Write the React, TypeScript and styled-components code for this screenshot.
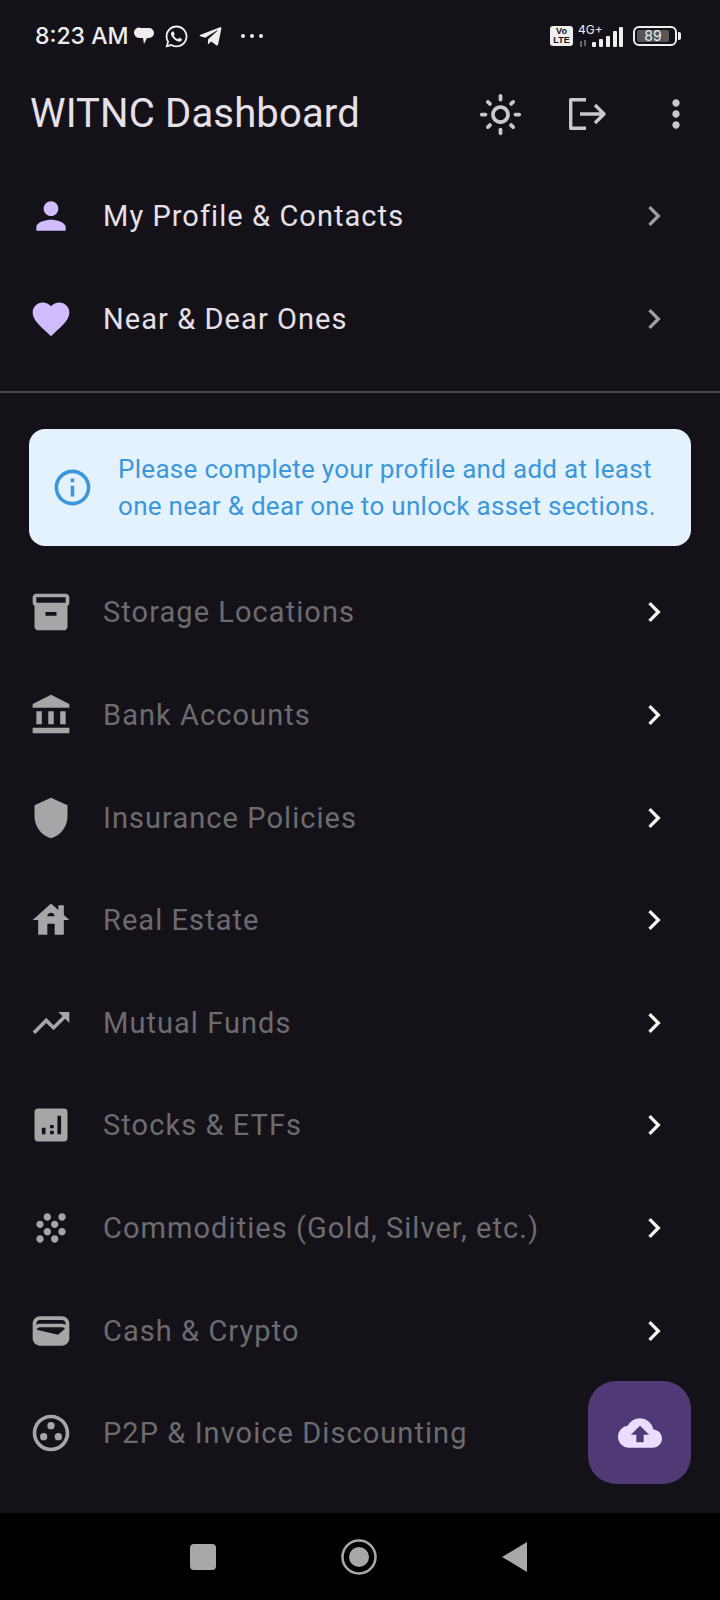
import React from "react";
import styled, { createGlobalStyle } from "styled-components";
import {
  MdPerson,
  MdFavorite,
  MdChevronRight,
  MdInfoOutline,
  MdInventory2,
  MdAccountBalance,
  MdShield,
  MdHouse,
  MdTrendingUp,
  MdGrain,
  MdWallet,
  MdOutlineGroupWork,
  MdOutlineLightMode,
  MdMoreVert,
  MdCloudUpload,
} from "react-icons/md";
import { FaWhatsapp, FaTelegramPlane } from "react-icons/fa";

const GlobalStyle = createGlobalStyle`
  html, body {
    margin: 0;
    padding: 0;
    background: #141218;
  }
  * {
    box-sizing: border-box;
  }
`;

const Screen = styled.div`
  position: relative;
  width: 720px;
  height: 1600px;
  overflow: hidden;
  display: flex;
  flex-direction: column;
  background: #141218;
  font-family: Roboto, "Liberation Sans", sans-serif;
`;

const StatusBar = styled.div`
  height: 72px;
  flex: none;
  display: flex;
  align-items: center;
  justify-content: space-between;
  padding: 0 39px 0 35px;
  color: #eeeeee;
`;

const StatusLeft = styled.div`
  display: flex;
  align-items: center;
`;

const Clock = styled.span`
  font-family: Inter, Roboto, sans-serif;
  font-size: 23px;
  font-weight: 500;
  margin-right: 5px;
`;

const WhatsappIcon = styled(FaWhatsapp)`
  margin-left: 9px;
`;

const TelegramIcon = styled(FaTelegramPlane)`
  margin-left: 9px;
`;

const Dots = styled.span`
  display: flex;
  gap: 5px;
  margin-left: 18px;
  i {
    width: 4px;
    height: 4px;
    border-radius: 50%;
    background: #eeeeee;
  }
`;

const StatusRight = styled.div`
  display: flex;
  align-items: center;
`;

const VoLte = styled.span`
  width: 23px;
  height: 20px;
  border-radius: 3px;
  background: #eeeeee;
  color: #141218;
  font-size: 9px;
  line-height: 9px;
  font-weight: 700;
  text-align: center;
  padding-top: 1px;
  font-family: "Liberation Sans", sans-serif;
`;

const Network = styled.span`
  position: relative;
  width: 46px;
  height: 24px;
  margin-left: 5px;
  span {
    position: absolute;
    left: 0;
    top: -1px;
    font-size: 12px;
    line-height: 13px;
    font-family: Inter, sans-serif;
  }
`;

const Battery = styled.span`
  width: 44px;
  height: 20px;
  margin-left: 9px;
  border: 2px solid #eeeeee;
  border-radius: 6px;
  padding: 2px;
  display: flex;
`;

const BatteryFill = styled.span`
  flex: none;
  width: 89%;
  background: #55555a;
  border-radius: 2px;
  color: #eeeeee;
  font-size: 14px;
  line-height: 12px;
  text-align: center;
  font-family: Inter, sans-serif;
`;

const BatteryCap = styled.span`
  width: 3px;
  height: 8px;
  margin-left: 1px;
  background: #eeeeee;
  border-radius: 0 2px 2px 0;
`;

const Header = styled.header`
  height: 80px;
  flex: none;
  display: flex;
  align-items: center;
  padding: 0 20px 0 30px;
  color: #e6e0e9;
`;

const Title = styled.h1`
  flex: 1;
  margin: 2px 0 0;
  font-size: 40px;
  font-weight: 400;
  letter-spacing: 0.15px;
`;

const HeaderActions = styled.div`
  display: flex;
  align-items: center;
  gap: 40px;
  margin-top: 4px;
  color: #cac8cc;
`;

const HeaderButton = styled.span`
  width: 48px;
  height: 48px;
  display: flex;
  align-items: center;
  justify-content: center;
`;

const TopList = styled.div`
  flex: none;
  padding-top: 13px;
`;

const Row = styled.div`
  height: 102.6px;
  display: flex;
  align-items: center;
  padding: 0 46px 0 29px;
`;

const RowIcon = styled.span<{ $tone: "accent" | "muted" }>`
  width: 44px;
  height: 44px;
  flex: none;
  display: flex;
  align-items: center;
  justify-content: center;
  color: ${(p) => (p.$tone === "accent" ? "#d0bcff" : "#a6a5a8")};
`;

const RowLabel = styled.span<{ $muted?: boolean }>`
  flex: 1;
  margin-left: 30px;
  font-size: 29px;
  letter-spacing: 1.06px;
  color: ${(p) => (p.$muted ? "#6c6b70" : "#e6e0e9")};
`;

const Chevron = styled.span<{ $muted?: boolean }>`
  display: flex;
  color: ${(p) => (p.$muted ? "#f4f4f4" : "#a09ea4")};
`;

const Divider = styled.hr`
  flex: none;
  width: 100%;
  height: 2px;
  margin: 21px 0 36px;
  border: 0;
  background: #49454f;
`;

const Banner = styled.div`
  flex: none;
  height: 117px;
  margin: 0 29px 15px;
  padding: 0 16px 0 22px;
  display: flex;
  align-items: center;
  gap: 24px;
  border-radius: 16px;
  background: #e3f2fd;
  color: #3b97dc;
`;

const BannerText = styled.p`
  margin: 0;
  font-size: 26px;
  line-height: 37px;
  letter-spacing: 0.3px;
  white-space: nowrap;
`;

const Nav = styled.nav`
  position: absolute;
  left: 0;
  right: 0;
  bottom: 0;
  height: 87px;
  background: #000;
  display: flex;
  align-items: center;
  justify-content: center;
  gap: 125px;
  padding-right: 3px;
`;

const Fab = styled.button`
  position: absolute;
  left: 588px;
  top: 1381px;
  width: 103px;
  height: 103px;
  border: 0;
  border-radius: 28px;
  background: #4f3a76;
  color: #eaddff;
  display: flex;
  align-items: center;
  justify-content: center;
`;

const LockedRows = [
  { label: "Storage Locations", icon: <MdInventory2 size={44} /> },
  { label: "Bank Accounts", icon: <MdAccountBalance size={44} /> },
  { label: "Insurance Policies", icon: <MdShield size={44} /> },
  { label: "Real Estate", icon: <MdHouse size={44} /> },
  { label: "Mutual Funds", icon: <MdTrendingUp size={44} /> },
  {
    label: "Stocks & ETFs",
    icon: (
      <svg width="44" height="44" viewBox="0 0 24 24" fill="currentColor">
        <path d="M5 3h14a2 2 0 0 1 2 2v14a2 2 0 0 1-2 2H5a2 2 0 0 1-2-2V5a2 2 0 0 1 2-2zm2 10.5V17h2v-3.500zm4.500-1.500v1.800h2V12zm0 3.200V17h2v-1.800zM15.500 7v10h2V7z" fillRule="evenodd" />
      </svg>
    ),
  },
  { label: "Commodities (Gold, Silver, etc.)", icon: <MdGrain size={44} /> },
  { label: "Cash & Crypto", icon: <MdWallet size={44} /> },
  { label: "P2P & Invoice Discounting", icon: <MdOutlineGroupWork size={44} /> },
];

export default function App() {
  return (
    <Screen>
      <GlobalStyle />
      <StatusBar>
        <StatusLeft>
          <Clock>8:23 AM</Clock>
          <svg width="22" height="22" viewBox="0 0 22 22" fill="#eeeeee">
            <path d="M8 3h8a5 5 0 0 1 5 5 5 5 0 0 1-5 5h-2l-3 6-1-6H7a6 6 0 0 1-6-5 5 5 0 0 1 7-5z" />
          </svg>
          <WhatsappIcon size={25} />
          <TelegramIcon size={25} />
          <Dots>
            <i />
            <i />
            <i />
          </Dots>
        </StatusLeft>
        <StatusRight>
          <VoLte>
            Vo
            <br />
            LTE
          </VoLte>
          <Network>
            <span>4G+</span>
            <svg width="46" height="24" viewBox="0 0 46 24" fill="#eeeeee">
              <rect x="14" y="18" width="4" height="5" rx="1" />
              <rect x="21" y="15" width="4" height="8" rx="1" />
              <rect x="28" y="12" width="4" height="11" rx="1" />
              <rect x="35" y="7" width="4" height="16" rx="1" />
              <rect x="41" y="3" width="4" height="20" rx="1" />
              <path d="M2 17h2v6H2zM6 16h2v6H6z" fill="#666" />
            </svg>
          </Network>
          <Battery>
            <BatteryFill>89</BatteryFill>
          </Battery>
          <BatteryCap />
        </StatusRight>
      </StatusBar>
      <Header>
        <Title>WITNC Dashboard</Title>
        <HeaderActions>
          <HeaderButton>
            <MdOutlineLightMode size={45} />
          </HeaderButton>
          <HeaderButton>
            <svg width="44" height="44" viewBox="0 0 44 44" fill="none" stroke="currentColor" strokeWidth="3.400" strokeLinejoin="round">
              <path d="M20 7.700H4.700v28.600H20M14 22h24M29 13l9 9-9 9" />
            </svg>
          </HeaderButton>
          <HeaderButton>
            <MdMoreVert size={44} />
          </HeaderButton>
        </HeaderActions>
      </Header>
      <TopList>
        <Row>
          <RowIcon $tone="accent">
            <MdPerson size={44} />
          </RowIcon>
          <RowLabel>My Profile &amp; Contacts</RowLabel>
          <Chevron>
            <MdChevronRight size={40} />
          </Chevron>
        </Row>
        <Row>
          <RowIcon $tone="accent">
            <MdFavorite size={44} />
          </RowIcon>
          <RowLabel>Near &amp; Dear Ones</RowLabel>
          <Chevron>
            <MdChevronRight size={40} />
          </Chevron>
        </Row>
      </TopList>
      <Divider />
      <Banner>
        <MdInfoOutline size={43} />
        <BannerText>
          Please complete your profile and add at least
          <br />
          one near &amp; dear one to unlock asset sections.
        </BannerText>
      </Banner>
      {LockedRows.map((row) => (
        <Row key={row.label}>
          <RowIcon $tone="muted">{row.icon}</RowIcon>
          <RowLabel $muted>{row.label}</RowLabel>
          <Chevron $muted>
            <MdChevronRight size={40} />
          </Chevron>
        </Row>
      ))}
      <Fab>
        <MdCloudUpload size={44} />
      </Fab>
      <Nav>
        <svg width="26" height="26" viewBox="0 0 26 26" fill="#a8a8a8">
          <rect width="26" height="26" rx="4" />
        </svg>
        <svg width="36" height="36" viewBox="0 0 36 36" fill="#a8a8a8">
          <circle cx="18" cy="18" r="16.500" fill="none" stroke="#a8a8a8" strokeWidth="2.500" />
          <circle cx="18" cy="18" r="10" />
        </svg>
        <svg width="26" height="30" viewBox="0 0 26 30" fill="#a8a8a8">
          <path d="M25 0v30L0 15z" />
        </svg>
      </Nav>
    </Screen>
  );
}
